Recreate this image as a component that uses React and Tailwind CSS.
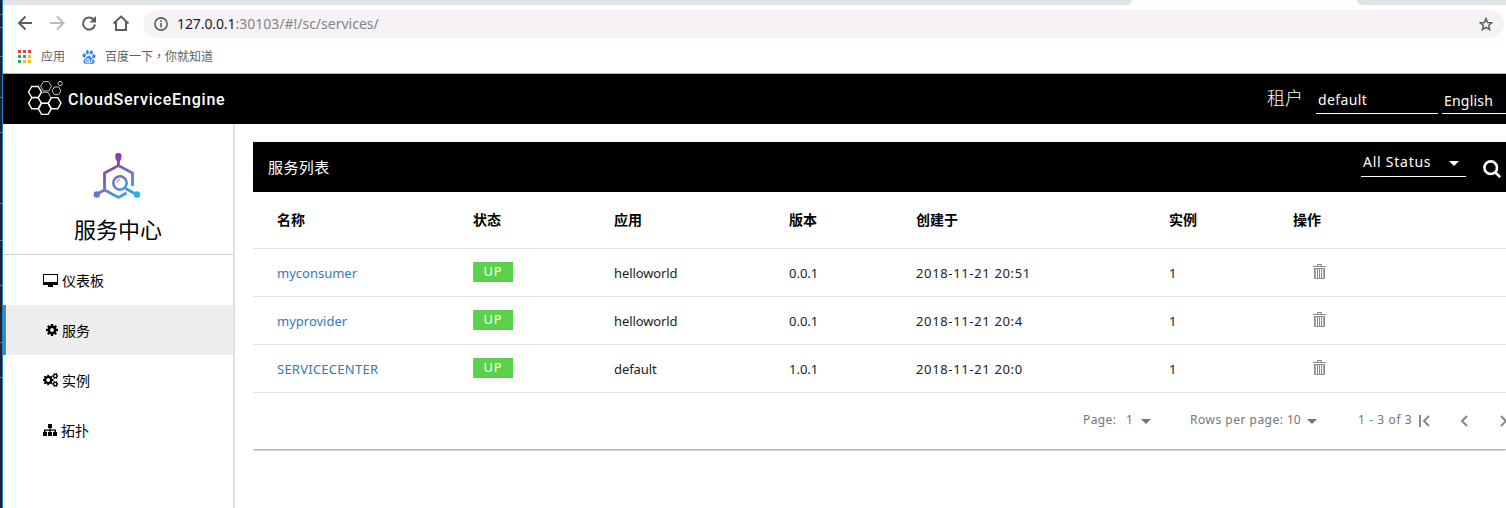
import React from "react";
import { SiBaidu } from "react-icons/si";

const UI = "font-['Noto_Sans','Noto_Sans_CJK_SC',sans-serif]";

function gearPath(cx, cy, outer, inner, hole, teeth) {
  const pts = [];
  const step = (Math.PI * 2) / teeth;
  for (let i = 0; i < teeth; i++) {
    const a = i * step;
    [[-0.3, inner], [-0.24, outer], [0.24, outer], [0.3, inner]].forEach(([f, r]) => {
      const t = a + f * step;
      pts.push(`${(cx + r * Math.cos(t)).toFixed(2)} ${(cy + r * Math.sin(t)).toFixed(2)}`);
    });
  }
  return `M${pts.join("L")}ZM${cx - hole} ${cy}a${hole} ${hole} 0 1 0 ${hole * 2} 0a${hole} ${hole} 0 1 0 ${-hole * 2} 0Z`;
}

function hexPath(cx, cy, r) {
  const pts = [0, 1, 2, 3, 4, 5].map((i) => {
    const t = (i * Math.PI) / 3;
    return `${(cx + r * Math.cos(t)).toFixed(2)} ${(cy + r * Math.sin(t)).toFixed(2)}`;
  });
  return `M${pts.join("L")}Z`;
}

function Caret({ className }) {
  return (
    <svg viewBox="0 0 10 5" className={`h-[5px] w-[10px] shrink-0 fill-current ${className}`}>
      <path d="M0 0h10L5 5z" />
    </svg>
  );
}

function Browser() {
  const dots = ["#ea4335", "#ea4335", "#ea4335", "#34a853", "#4285f4", "#fbbc04", "#34a853", "#fbbc04", "#fbbc04"];
  return (
    <div className="h-[74px] shrink-0 border-b border-[#b0b0b0] bg-white">
      <div className="flex h-[5px] justify-between">
        <div className="w-[1129px] rounded-br-[5px] bg-[#dee3e7]" />
        <div className="w-[149px] rounded-bl-[5px] bg-[#dee3e7]" />
      </div>
      <div className="flex h-[38px] items-center pr-[2px] text-[#5a5f64]">
        <svg viewBox="0 0 140 28" className="h-[28px] w-[140px] shrink-0" fill="none" stroke="currentColor" strokeWidth="2">
          <path d="M29 13H16.500M22.500 6.500L16 13l6.500 6.500" />
          <path d="M47 13h13M54 6.500l6.500 6.500-6.500 6.500" stroke="#b9bbbd" />
          <path d="M90.600 9.600A6 6 0 1 0 92 14.500" />
          <path d="M93 6v6.500h-6.500z" fill="currentColor" stroke="none" />
          <path d="M110.500 13.500l7.500-7 7.500 7M113 12v8h10v-8" />
        </svg>
        <div className="flex h-[28px] flex-1 items-center rounded-full bg-[#f6f2f6] pl-[11px] pr-[11px]">
          <svg viewBox="0 0 14 14" className="h-[14px] w-[14px]" fill="none" stroke="currentColor" strokeWidth="1.600">
            <circle cx="7" cy="7" r="6.100" />
            <path d="M7 6v4.500M7 3.300v1.600" />
          </svg>
          <div className={`ml-[9px] flex-1 whitespace-nowrap text-[14px] leading-[28px] text-[#808386] ${UI}`}>
            <span className="tracking-[-0.1px] text-[#202124]">127.0.0.1</span>
            <span className="tracking-[0px]">:30103/#!/sc/services/</span>
          </div>
          <svg viewBox="0 0 14 14" className="h-[14px] w-[14px]" fill="none" stroke="currentColor" strokeWidth="1.500">
            <path d="M7 1.600l1.600 3.900 4.200.3-3.200 2.700 1 4.100L7 10.400l-3.600 2.200 1-4.100L1.200 5.800l4.200-.3z" />
          </svg>
        </div>
      </div>
      <div className={`flex h-[27px] items-center text-[12px] text-[#5a5f64] ${UI}`}>
        <div className="ml-[15px] grid grid-cols-3 gap-[2px]">
          {dots.map((c, i) => (
            <span key={i} className="h-[3px] w-[3px]" style={{ background: c }} />
          ))}
        </div>
        <span className="ml-[10px]">应用</span>
        <SiBaidu className="ml-[17px] h-[14px] w-[14px] text-[#3385ff]" />
        <span className="ml-[9px]">百度一下<span className="font-['Noto_Sans_CJK_TC',sans-serif]">，</span>你就知道</span>
      </div>
    </div>
  );
}

function TopBar() {
  return (
    <div className={`flex h-[50px] shrink-0 bg-black text-white ${UI}`}>
      <svg viewBox="0 0 36 36" className="ml-[24px] mt-[6px] h-[36px] w-[36px]" fill="none" stroke="#fff" strokeWidth="1.400">
        <path d={hexPath(17.8, 17.800, 6.3)} strokeWidth="1" stroke="#bbb" />
        <path d={hexPath(8, 12, 6.4)} />
        <path d={hexPath(8, 23.200, 6.4)} />
        <path d={hexPath(17.8, 28.800, 6.4)} />
        <path d={hexPath(27.6, 23.200, 6.4)} />
        <path d={hexPath(19, 6.300, 5.4)} strokeWidth="1" stroke="#ccc" />
        <path d={hexPath(29.5, 10.800, 4.4)} strokeWidth="1" stroke="#ccc" />
        <path d={hexPath(33.2, 3.500, 2.2)} strokeWidth="1" stroke="#ccc" />
      </svg>
      <div className="ml-[5px] flex-1 font-['Roboto',sans-serif] text-[16px] font-medium leading-[52px] tracking-[0.8px]">CloudServiceEngine</div>
      <div className="w-[49px] text-[18px] font-light leading-[49px]">租户</div>
      <div className="mt-[13px] h-[27px] w-[122px] border-b border-white pl-[2px] text-[14px] leading-[26px] tracking-[0.4px]">default</div>
      <div className="ml-[4px] mt-[13px] h-[27px] w-[64px] border-b border-white pl-[2px] text-[14px] leading-[28px] tracking-[0.2px]">English</div>
    </div>
  );
}

function DesktopIcon() {
  return (
    <svg viewBox="0 0 15 13" className="h-[13px] w-[15px]">
      <path fillRule="evenodd" d="M0 0h15v11h-5v2H5v-2H0zM1 1v7h13V1z" />
    </svg>
  );
}
function CogIcon() {
  return (
    <svg viewBox="0 0 12 12" className="h-[12px] w-[12px]">
      <path fillRule="evenodd" d={gearPath(6, 6, 6.1, 4.6, 1.9, 8)} />
    </svg>
  );
}
function CogsIcon() {
  return (
    <svg viewBox="0 0 15 14" className="h-[14px] w-[15px]">
      <path fillRule="evenodd" d={gearPath(5.2, 7, 5.4, 4.1, 1.9, 8) + gearPath(12.3, 3, 3, 2.4, 1.1, 6) + gearPath(12.3, 11, 3, 2.4, 1.1, 6)} />
    </svg>
  );
}
function SitemapIcon() {
  return (
    <svg viewBox="0 0 14 12" className="h-[12px] w-[14px]">
      <path d="M5 0h4v4H7.600v1.500H13V8h1v4h-4V8h1.500V6.800H7.600V8H9v4H5V8h1.400V6.800H2.500V8H4v4H0V8h1V5.500h5.400V4H5z" />
    </svg>
  );
}

function HubLogo() {
  return (
    <svg viewBox="0 0 48 48" className="h-[48px] w-[48px] shrink-0 -translate-x-px" fill="none" stroke="url(#hub)" strokeWidth="2.800">
      <defs>
        <linearGradient id="hub" gradientUnits="userSpaceOnUse" x1="12" y1="2" x2="40" y2="44">
          <stop offset="0.100" stopColor="#8e2fa8" />
          <stop offset="0.550" stopColor="#6a74c8" />
          <stop offset="1" stopColor="#22b4e4" />
        </linearGradient>
      </defs>
      <path d="M39.500 33V20L25.500 12.500 11.500 20v17l14 7.500 8-4.500" />
      <path d="M25.400 12.500V3M11.500 37l-8.500 4.500M32.500 35.500l11 6" />
      <circle cx="27" cy="30" r="6.700" strokeWidth="2.500" />
      <path d="M23.800 29.500a3.500 3.500 0 0 1 3-3" strokeWidth="1" />
      <g fill="url(#hub)" stroke="none">
        <path d="M22.200 3.200a3.200 3.200 0 0 1 6.400 0q0 2.500-1.700 5h-3q-1.700-2.500-1.700-5z" />
        <circle cx="3.800" cy="41.500" r="3.200" />
        <circle cx="44" cy="41.500" r="3.200" />
      </g>
    </svg>
  );
}

function Sidebar() {
  const items = [
    { label: "仪表板", icon: <DesktopIcon /> },
    { label: "服务", icon: <CogIcon />, active: true },
    { label: "实例", icon: <CogsIcon /> },
    { label: "拓扑", icon: <SitemapIcon /> },
  ];
  return (
    <div className={`w-[232px] shrink-0 border-r-2 border-[#e0e0e0] text-black ${UI}`}>
      <div className="flex h-[131px] flex-col items-center border-b border-[#cfcfcf] pt-[29px]">
        <HubLogo />
        <div className="mt-[11px] text-[22px] leading-[34px]">服务中心</div>
      </div>
      {items.map((it) => (
        <div key={it.label} className={`flex h-[50px] items-center gap-[4px] pl-[40px] text-[14px] ${it.active ? "border-l-[3px] border-[#3a8cc4] bg-[#eeeeee]" : ""}`}>
          {it.icon}
          <span>{it.label}</span>
        </div>
      ))}
    </div>
  );
}

function Trash() {
  return (
    <svg viewBox="0 0 13 15" className="ml-[20px] h-[15px] w-[13px] -translate-y-px" fill="none" stroke="#8c8c8c">
      <path d="M0 2.500h13M4.500 2V.5h4V2M1 4.500h11M1.500 4v10.500h10V4M4.500 5v9M6.500 5v9M8.500 5v9" />
      <path d="M2.500 5v9M10.500 5v9" stroke="#a5a5a5" />
    </svg>
  );
}

const COLS = "grid grid-cols-[220px_141px_175px_127px_253px_124px_1fr] items-center";

function Main() {
  const rows = [
    { name: "myconsumer", track: "tracking-[0px]", app: "helloworld", v: "0.0.1", t: "2018-11-21 20:51" },
    { name: "myprovider", track: "tracking-[0px]", app: "helloworld", v: "0.0.1", t: "2018-11-21 20:4" },
    { name: "SERVICECENTER", track: "tracking-[0.25px]", app: "default", v: "1.0.1", t: "2018-11-21 20:0" },
  ];
  return (
    <div className={`ml-[18px] mt-[18px] h-[308px] min-w-0 flex-1 border-b border-[#b5b5b5] shadow-[0_2px_1px_-1px_rgba(0,0,0,0.15)] ${UI}`}>
      <div className="flex h-[50px] bg-black text-white">
        <div className="flex-1 pl-[15px] text-[15px] leading-[50px] tracking-[0.4px]">服务列表</div>
        <div className="mt-[8px] flex h-[27px] w-[105px] items-center border-b border-white pb-[3px] pl-[2px] text-[14px] tracking-[0.75px]">
          <span className="w-[86px] whitespace-nowrap">All Status</span>
          <Caret className="mt-[3px]" />
        </div>
        <svg viewBox="0 0 18 18" className="ml-[17px] mr-[5px] mt-[18px] h-[18px] w-[18px] shrink-0" fill="none" stroke="#fff" strokeWidth="2.600">
          <circle cx="7.700" cy="7.700" r="6.300" />
          <path d="M12 12l5.200 5.200" />
        </svg>
      </div>
      <div className={`${COLS} h-[57px] border-b border-[#e0e0e0] pb-[2px] text-[14px] font-bold text-black`}>
        <div className="pl-[24px]">名称</div>
        <div>状态</div>
        <div>应用</div>
        <div>版本</div>
        <div>创建于</div>
        <div>实例</div>
        <div>操作</div>
      </div>
      {rows.map((r) => (
        <div key={r.name} className={`${COLS} h-[48px] border-b border-[#e0e0e0] text-[13px] leading-[18px] text-[#212121]`}>
          <div className={`pl-[24px] text-[#337ab7] ${r.track}`}>{r.name}</div>
          <div className="h-[20px] w-[40px] -translate-y-px bg-[#5bd04b] text-center text-[13px] leading-[18px] tracking-[0.7px] text-white">UP</div>
          <div className="tracking-[-0.1px]">{r.app}</div>
          <div>{r.v}</div>
          <div className="tracking-[0.65px]">{r.t}</div>
          <div>1</div>
          <Trash />
        </div>
      ))}
      <div className="flex h-[56px] items-center overflow-hidden whitespace-nowrap pb-[2px] pl-[830px] text-[12px] text-[#757575] [&>*]:shrink-0">
        <span className="w-[43px] tracking-[0.4px]">Page:</span>
        <span className="w-[15px]">1</span>
        <Caret className="mt-[3px]" />
        <span className="ml-[39px] w-[97px] tracking-[0.5px]">Rows per page:</span>
        <span className="w-[20px]">10</span>
        <Caret className="mt-[3px]" />
        <span className="ml-[41px] w-[61px] tracking-[0.6px]">1 - 3 of 3</span>
        <svg viewBox="0 0 90 12" className="mt-[2px] h-[12px] w-[90px]" fill="none" stroke="#858585" strokeWidth="1.900">
          <path d="M1 0v12M10 1L5 6l5 5M48 1l-5 5 5 5M82 1l5 5-5 5" />
        </svg>
      </div>
    </div>
  );
}

export default function App() {
  const marks = ["mt-[14px]", "mt-[12px]", "mt-[28px]", "mt-[40px]", "mt-[34px]", "mt-[70px]", "mt-[36px]", "mt-[44px]", "mt-[56px]", "mt-[34px]"];
  return (
    <div className="flex h-[508px] w-[1506px] overflow-hidden bg-white">
      <div className="w-[3px] shrink-0 border-r border-[#1a7fd0] bg-[#222222]">
        {marks.map((m, i) => (
          <div key={i} className={`h-px bg-[#77776a] ${m}`} />
        ))}
      </div>
      <div className="flex w-[1503px] shrink-0 flex-col">
        <Browser />
        <TopBar />
        <div className="flex flex-1">
          <Sidebar />
          <Main />
        </div>
      </div>
    </div>
  );
}
